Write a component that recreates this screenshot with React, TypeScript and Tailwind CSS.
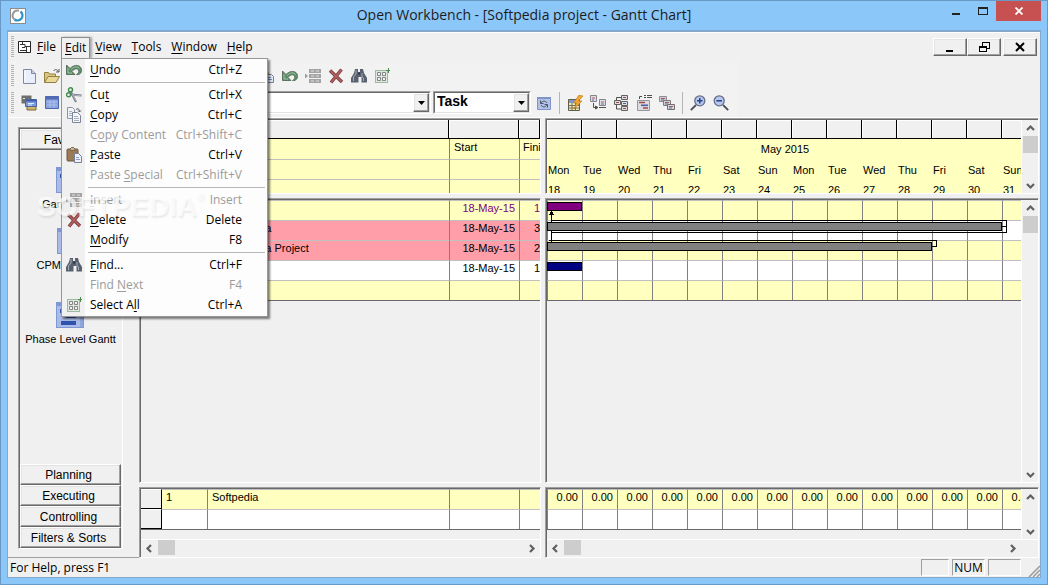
import React from 'react';
import clsx from 'clsx';

const RAISED = 'border border-t-white border-l-white border-r-[#696969] border-b-[#696969] shadow-[inset_-1px_-1px_0_#a0a0a0,inset_1px_1px_0_#e3e3e3]';

type IconProps = { className?: string };

const Svg: React.FC<{ children: React.ReactNode; className?: string }> = ({ children, className }) => (
  <svg viewBox="0 0 16 16" className={clsx('h-4 w-4 flex-none', className)} fill="none" aria-hidden="true">
    {children}
  </svg>
);

const UndoIcon: React.FC<IconProps> = ({ className }) => (
  <Svg className={className}>
    <path d="M.5 3v9.500h8.500l-3-3C8 6.500 11.500 6 12.500 8c1 2-.5 3.500-2 4.500 3.500.5 5.500-2 5-5C14.800 3 9 1.500 4 6.500Z" fill="#5f9069" stroke="#47604c" strokeWidth=".8" />
    <path d="M2 6v5h4M5 7.500C8 4.500 12 4 13.500 6.500" stroke="#9cc2a2" />
  </Svg>
);

const CutIcon = () => (
  <Svg>
    <circle cx="4.500" cy="2.800" r="2" stroke="#3c8a47" strokeWidth="1.400" />
    <circle cx="2.600" cy="7.800" r="2" stroke="#3c8a47" strokeWidth="1.400" />
    <path d="M5 5l5 10M4.500 7.500l11 1" stroke="#6f7785" strokeWidth="2" />
    <path d="M6 6.500l4 7.500M7 8l8 .7" stroke="#c3c8d2" strokeWidth=".8" />
  </Svg>
);

const CopyIcon = () => (
  <Svg>
    <path d="M1.500.5h5l2 2v9h-7z" fill="#eef1f6" stroke="#8b93a4" />
    <path d="M3 4.500h3M3 6.500h3M3 8.500h3" stroke="#a9b1c0" />
    <path d="M6.500 5.500h5l3 3v7h-8z" fill="#f5f7fb" stroke="#7d8698" />
    <path d="M8 9.500h4M8 11.500h5M8 13.500h5" stroke="#a9b1c0" />
    <path d="M10 2.500c2-1.500 3.500-.5 3.500 2M12 3.500l1.500 1.500L15 3.500" stroke="#4d5563" />
  </Svg>
);

const PasteIcon = () => (
  <Svg>
    <rect x="1" y="2" width="11" height="12" rx="1" fill="#9a7b55" stroke="#6e583e" />
    <path d="M4 3.500V2l1.500-1.500h2L9 2v1.500z" fill="#c2b291" stroke="#776850" />
    <path d="M8.500 6.500h4l3 3v6h-7z" fill="#eef2fa" stroke="#75809a" />
    <path d="M10 10.500h3M10 12.500h4" stroke="#8fa0c4" />
  </Svg>
);

const InsertIcon = () => (
  <Svg>
    <path d="M0 5.500l3 2.500-3 2.500z" fill="#9c9c9c" />
    <path d="M4 1h12v4H4zM4 6h12v4H4zM4 11h12v4H4z" fill="#a3a3a3" />
    <path d="M6 3h3M11 3h3M6 8h3M11 8h3M6 13h3M11 13h3" stroke="#e2e2e2" />
  </Svg>
);

const DeleteIcon = () => (
  <Svg>
    <path d="M2 2.500l12 11.500M13.500 1.500L3 14.500" stroke="#7a4243" strokeWidth="3.400" />
    <path d="M2 2.500l12 11.500M13.500 1.500L3 14.500" stroke="#b9605f" strokeWidth="1.600" />
  </Svg>
);

const FindIcon = () => (
  <Svg>
    <path d="M4 1h3v3h2V1h3l1 4 3 5v4.500h-5.500V9h-3v5.500H0V10l3-5z" fill="#59616f" />
    <path d="M5 2v4L2.500 9v4M11 5v4l1.500 1v3" stroke="#a5aebc" />
    <path d="M7 5.500h2" stroke="#2f3540" strokeWidth="2" />
  </Svg>
);

const SelectAllIcon = () => (
  <Svg>
    <rect x="1.500" y="2.500" width="12" height="12" stroke="#4f8a55" strokeDasharray="1 1" fill="#dfe8e0" />
    <path d="M3.500 4.500h3v3h-3zM8.500 4.500h3v3h-3zM3.500 9.500h3v3h-3zM8.500 9.500h3v3h-3z" fill="#f4f4f4" stroke="#858585" />
    <path d="M14.500 0v5M12 2.500h4" stroke="#4f8a55" />
  </Svg>
);

const NewIcon = () => (
  <Svg>
    <path d="M2.500 1.500h8l4 4v10h-12z" fill="#e9eefb" stroke="#8089a3" />
    <path d="M10.500 1.500v4h4" fill="#c5cde0" stroke="#8089a3" />
    <path d="M4 14V3" stroke="#fff" />
  </Svg>
);

const OpenIcon = () => (
  <Svg>
    <path d="M.5 14.500v-10h4l1 1.500h6v3" fill="#d9c684" stroke="#93803f" />
    <path d="M.5 14.500l3.500-6h11.500l-3.500 6z" fill="#e8d899" stroke="#93803f" />
    <path d="M9.500 3c2-2.500 4-1.500 5 1M12 4h3V1" stroke="#565b63" />
  </Svg>
);

const PreviewIcon = () => (
  <Svg>
    <path d="M7 1l4 6H5z" fill="#a9875b" />
    <path d="M6.500 6.500h6l2 2v6h-8z" fill="#dfe6f5" stroke="#75809a" />
    <path d="M8 9.500h4M8 11.500h5" stroke="#7b8bb5" />
  </Svg>
);

const ViewsIcon = () => (
  <Svg>
    <path d="M6 6h9v9H6z" fill="#cfb865" stroke="#78693a" />
    <path d="M.5.500h10v8H.500z" fill="#70706b" />
    <path d="M4.500 4.500h11v7h-11z" fill="#7a98dd" stroke="#4a62a0" />
    <path d="M5 5.500h10" stroke="#3f5da8" strokeWidth="2" />
    <path d="M2 3.500h2M7 8.500h6M7 10h4" stroke="#dfe7fb" />
  </Svg>
);

const WindowIcon = () => (
  <Svg>
    <path d="M1.500 1.500h13v12h-13z" fill="#88a2df" stroke="#4a66ad" />
    <path d="M1 3h14" stroke="#4f6cb4" strokeWidth="3" />
    <path d="M3 7h10M3 10h10M6 5v8M10 5v8" stroke="#aebfec" />
  </Svg>
);

const RefreshIcon = () => (
  <Svg>
    <path d="M1.500 2.500h13v12h-13z" fill="#b4c1e4" stroke="#7f94c8" />
    <path d="M1 3h14" stroke="#7f94c8" strokeWidth="2" />
    <path d="M4.500 5.500v3h3M5 8c1.500-2.500 4.500-2.500 6 0M11.500 12.500v-3h-3M11 10c-1.500 2.500-4.500 2.500-6 0" stroke="#46536f" />
  </Svg>
);

const ScheduleIcon = () => (
  <Svg>
    <path d="M1.500 4.500h11v11h-11z" fill="#efe8b5" stroke="#5d5d49" />
    <path d="M2 5h10v3H2z" fill="#7f96cf" />
    <path d="M2 10.500h10M2 13h10M5 8v7M8.500 8v7" stroke="#6f7058" />
    <path d="M12 0L6.500 8h3L7 14l8-8h-3.500L16 1z" fill="#f3a52f" stroke="#b9741c" strokeWidth=".6" />
  </Svg>
);

const LinkIcon = () => (
  <Svg>
    <path d="M.5.500h6v6h-6zM9.500 4.500h6v6h-6z" fill="#dddde6" stroke="#85858d" />
    <path d="M2 3h3M11 7h3" stroke="#b0595a" />
    <path d="M2 5h2M11 9h3" stroke="#5d6fb0" />
    <path d="M3.500 8v4.500H7M5.500 11v3L8 12.500zM9 12.500h7" stroke="#4e5148" />
  </Svg>
);

const NetworkIcon = () => (
  <Svg>
    <path d="M8.500.500h6v4h-6zM1.500 5.500h6v4h-6zM8.500 6.500h6v4h-6zM8.500 11.500h6v4h-6z" fill="#dddde6" stroke="#62625c" />
    <path d="M10 2.500h3M3 7.500h3M10 13.500h3" stroke="#a7484a" />
    <path d="M10 8.500h3" stroke="#4b5fa8" />
    <path d="M8 2.500H3.500V5M3.500 10v4H8" stroke="#4e5148" />
  </Svg>
);

const OutlineIcon = () => (
  <Svg>
    <path d="M3.500 4V1.500H6M8 .500h2M11 .500h5M8 2.500h2M11 2.500h5" stroke="#4e5148" />
    <path d="M1.500 5.500h12v10h-12z" fill="#dcdce0" stroke="#96969b" />
    <path d="M3 7.500h6M7 13h5" stroke="#a7484a" strokeWidth="1.600" />
    <path d="M5 10.300h7" stroke="#4b5fa8" strokeWidth="1.600" />
  </Svg>
);

const CascadeIcon = () => (
  <Svg>
    <path d="M.5 1.500h7v5h-7z" fill="#cfcfd6" stroke="#8b8b90" />
    <path d="M4.500 5.500h7v5h-7z" fill="#cfcfd6" stroke="#7c7c82" />
    <path d="M8.500 9.500h7v5h-7z" fill="#d5d5dc" stroke="#6f6f75" />
    <path d="M2 3.500h4M6 7.500h4M10 11.500h4" stroke="#b0595a" />
    <path d="M2 5h3M6 9h3M10 13h3" stroke="#5d6fb0" />
  </Svg>
);

const MagnifierIcon: React.FC<{ plus?: boolean }> = ({ plus }) => (
  <Svg className={plus ? '' : '-scale-x-100'}>
    <path d="M.8 15.200L6 10" stroke="#4c4e58" strokeWidth="1.800" />
    <circle cx="9.800" cy="5.800" r="5" fill="#b6c8f1" stroke="#686e84" strokeWidth="1.300" />
    <path d={plus ? 'M7 5.800h5.600M9.800 3v5.600' : 'M7 5.800h5.600'} stroke="#29427f" strokeWidth="1.500" />
  </Svg>
);

const GanttTile = () => (
  <svg viewBox="0 0 28 26" className="h-[26px] w-7" aria-hidden="true">
    <path d="M0 0h28v26H0z" fill="#7f98d3" />
    <path d="M1 4h26v21H1z" fill="#a9bbe6" />
    <path d="M4 7h5v4H4zM10 12h10v4H10zM5 19h15v4H5z" fill="#2e54ad" />
    <path d="M24 5h3v20h-3z" fill="#8fa6dc" />
  </svg>
);

const AppLogo = () => (
  <svg viewBox="0 0 16 16" className="h-4 w-4" aria-hidden="true">
    <path d="M0 0h16v16H0z" fill="#8b8b8b" />
    <path d="M1 1h14v14H1z" fill="#fff" />
    <path d="M4.500 11.500A5 5 0 0 1 9 2.800" stroke="#9a9a9a" strokeWidth="2" fill="none" />
    <path d="M10.500 3.500a4.800 4.800 0 1 1-6 8" stroke="#2e93c6" strokeWidth="2.200" fill="none" />
  </svg>
);

type MenuEntry = { before: string; key: string; after: string; shortcut: string; icon?: React.ReactNode; disabled?: boolean };

const MENU: (MenuEntry | null)[] = [
  { before: '', key: 'U', after: 'ndo', shortcut: 'Ctrl+Z', icon: <UndoIcon /> },
  null,
  { before: 'Cu', key: 't', after: '', shortcut: 'Ctrl+X', icon: <CutIcon /> },
  { before: '', key: 'C', after: 'opy', shortcut: 'Ctrl+C', icon: <CopyIcon /> },
  { before: 'C', key: 'o', after: 'py Content', shortcut: 'Ctrl+Shift+C', disabled: true },
  { before: '', key: 'P', after: 'aste', shortcut: 'Ctrl+V', icon: <PasteIcon /> },
  { before: 'Paste ', key: 'S', after: 'pecial', shortcut: 'Ctrl+Shift+V', disabled: true },
  null,
  { before: '', key: 'I', after: 'nsert', shortcut: 'Insert', icon: <InsertIcon />, disabled: true },
  { before: '', key: 'D', after: 'elete', shortcut: 'Delete', icon: <DeleteIcon /> },
  { before: '', key: 'M', after: 'odify', shortcut: 'F8' },
  null,
  { before: '', key: 'F', after: 'ind...', shortcut: 'Ctrl+F', icon: <FindIcon /> },
  { before: 'Find ', key: 'N', after: 'ext', shortcut: 'F4', disabled: true },
  { before: 'Select A', key: 'l', after: 'l', shortcut: 'Ctrl+A', icon: <SelectAllIcon /> },
];

const EditMenu = () => (
  <div role="menu" className="absolute -left-px top-[20px] z-20 w-[207px] border border-[#979797] bg-[linear-gradient(to_right,#f0f0f0_23px,#fdfdfd_23px)] py-px shadow-[2px_2px_2px_rgba(0,0,0,0.5)]">
    {MENU.map((m, i) =>
      m === null ? (
        <div key={i} role="separator" className="ml-[26px] mr-0.5 flex h-[5px] items-center">
          <div className="h-px w-full bg-[#b8b8b8]" />
        </div>
      ) : (
        <button key={i} role="menuitem" disabled={m.disabled} className={clsx('flex h-5 w-full items-center pl-1 pr-[25px]', m.disabled ? 'text-[#9b9b9b]' : 'text-black')}>
          <span className="flex w-6 flex-none items-center">{m.icon}</span>
          <span className="flex-1 whitespace-nowrap text-left">
            {m.before}<u className="underline-offset-2">{m.key}</u>{m.after}
          </span>
          <span className="whitespace-nowrap">{m.shortcut}</span>
        </button>
      )
    )}
  </div>
);

const Watermark = () => (
  <div className="pointer-events-none absolute left-9 top-[190px] z-30 flex font-['Liberation_Sans',sans-serif] text-[28px] leading-8 font-bold text-white/70 [text-shadow:1px_2px_2px_rgba(0,0,0,0.08)]">
    SOFTPEDIA<span className="text-[10px] leading-3">®</span>
  </div>
);

const TopItem: React.FC<{ label: string }> = ({ label }) => (
  <button className="px-[5px]">
    <u className="underline-offset-2">{label[0]}</u>{label.slice(1)}
  </button>
);

const Gripper = () => <div className="h-[22px] w-[3px] flex-none bg-[repeating-linear-gradient(#b4b4b4_0_1px,#f0f0f0_1px_2px)]" />;

const MenuBar = () => (
  <div className="flex h-7 items-center pl-[3px] pr-[3px]">
    <Gripper />
    <svg viewBox="0 0 13 13" className="ml-1 mr-px h-[13px] w-[13px]" aria-hidden="true">
      <path d="M.5.500h12v11H.500z" fill="#fff" stroke="#222" />
      <path d="M2 3.500h5v3H4M7 5.500h5M2 9.500h7M8.500 6v5M4.500 1v3" stroke="#333" fill="none" />
    </svg>
    <div className="flex items-center text-[12px] leading-4">
      <TopItem label="File" />
      <div className="relative border border-b-0 border-[#8c8c8c] bg-[#f0f0f0] pb-0.5 pt-0.5 shadow-[2px_0_2px_rgba(0,0,0,0.3)]">
        <button className="px-[3px]" aria-haspopup="menu" aria-expanded="true"><u className="underline-offset-2">E</u>dit</button>
        <EditMenu />
      </div>
      <TopItem label="View" />
      <TopItem label="Tools" />
      <TopItem label="Window" />
      <TopItem label="Help" />
    </div>
    <div className="ml-auto flex">
      <button aria-label="Minimize document" className={clsx('flex h-[18px] w-[34px] items-center justify-center', RAISED)}>
        <svg viewBox="0 0 12 12" className="h-3 w-3"><path d="M2 9h7v2H2z" /></svg>
      </button>
      <button aria-label="Restore document" className={clsx('flex h-[18px] w-[34px] items-center justify-center', RAISED)}>
        <svg viewBox="0 0 12 12" className="h-3 w-3" shapeRendering="crispEdges">
          <path d="M4.500 5V1.500h7v6H9M4 1h8M1.500 5.500h7v5h-7zM1 6h8" stroke="#000" fill="none" />
        </svg>
      </button>
      <button aria-label="Close document" className={clsx('ml-0.5 flex h-[18px] w-[34px] items-center justify-center', RAISED)}>
        <svg viewBox="0 0 12 12" className="h-3 w-3"><path d="M2 2l8 8M10 2l-8 8" stroke="#000" strokeWidth="2" /></svg>
      </button>
    </div>
  </div>
);

const ToolButton: React.FC<{ label: string; children: React.ReactNode }> = ({ label, children }) => (
  <button aria-label={label} className="flex h-[23px] w-[23px] flex-none items-center justify-center">{children}</button>
);

const ToolSeparator = () => <div className="ml-1 mr-[3px] h-[22px] w-px flex-none bg-[#b5b5b5]" />;

const Combo: React.FC<{ label: string; value: string; className: string }> = ({ label, value, className }) => (
  <div className={clsx('relative h-[23px] flex-none border border-[#a0a0a0] border-b-white border-r-white', className)}>
    <select aria-label={label} defaultValue={value} className="block h-full w-full appearance-none border border-[#696969] border-b-[#e3e3e3] border-r-[#e3e3e3] bg-white pl-0.5 pb-1 font-['Liberation_Sans',sans-serif] text-[14px] leading-4 font-bold">
      <option value={value}>{value}</option>
    </select>
    <span className={clsx('pointer-events-none absolute right-px top-px flex h-[19px] w-4 items-center justify-center bg-[#f0f0f0]', RAISED)}>
      <svg viewBox="0 0 7 4" className="h-1 w-[7px]"><path d="M0 0h7L3.500 4z" /></svg>
    </span>
  </div>
);

const Toolbars = () => (
  <div className="w-[730px] flex-none bg-[#f2f2f2] pb-px pl-[3px] pt-0.5">
    <div className="flex h-[26px] items-center">
      <Gripper />
      <div className="ml-[3px] flex">
        <ToolButton label="New"><NewIcon /></ToolButton>
        <ToolButton label="Open"><OpenIcon /></ToolButton>
      </div>
      <div className="ml-[192px] flex">
        <ToolButton label="Preview"><PreviewIcon /></ToolButton>
        <ToolButton label="Undo"><UndoIcon /></ToolButton>
        <ToolButton label="Insert"><InsertIcon /></ToolButton>
        <ToolButton label="Delete"><DeleteIcon /></ToolButton>
        <ToolButton label="Find"><FindIcon /></ToolButton>
        <ToolButton label="Select all"><SelectAllIcon /></ToolButton>
      </div>
    </div>
    <div className="flex h-[27px] items-center">
      <Gripper />
      <div className="ml-[3px] flex">
        <ToolButton label="Views"><ViewsIcon /></ToolButton>
        <ToolButton label="Window"><WindowIcon /></ToolButton>
      </div>
      <Combo label="View" value="" className="ml-[138px] w-[230px]" />
      <Combo label="Item type" value="Task" className="ml-[2px] w-[98px]" />
      <div className="ml-px flex items-center">
        <ToolButton label="Refresh"><RefreshIcon /></ToolButton>
        <ToolSeparator />
        <ToolButton label="Schedule"><ScheduleIcon /></ToolButton>
        <ToolButton label="Link"><LinkIcon /></ToolButton>
        <ToolButton label="Network"><NetworkIcon /></ToolButton>
        <ToolButton label="Outline"><OutlineIcon /></ToolButton>
        <ToolButton label="Cascade"><CascadeIcon /></ToolButton>
        <ToolSeparator />
        <ToolButton label="Zoom in"><MagnifierIcon plus /></ToolButton>
        <ToolButton label="Zoom out"><MagnifierIcon /></ToolButton>
      </div>
    </div>
  </div>
);

const SideButton: React.FC<{ label: string }> = ({ label }) => (
  <button className={clsx('h-[21px] w-full flex-none bg-[#f0f0f0] pr-1 text-center text-[12px] leading-[18px]', RAISED)}>{label}</button>
);

const VIEWS = [
  { label: 'Gantt Chart', gap: 'mb-[17px]' },
  { label: 'CPM Network', gap: 'mb-[30px]' },
  { label: 'Phase Level Gantt', gap: '' },
];

const Sidebar = () => (
  <aside className="flex w-[131px] flex-none flex-col border-b border-b-[#a0a0a0] pb-2 pl-2.5 pr-4 pt-[9px]">
    <div className="flex flex-1 flex-col border border-b-white border-l-[#a0a0a0] border-r-white border-t-[#a0a0a0]">
      <div className="flex flex-1 flex-col border-l border-t border-[#696969] pr-px">
        <SideButton label="Favorites" />
        <nav className="flex flex-1 flex-col items-center pt-[17px]">
          {VIEWS.map((v) => (
            <a key={v.label} href="#" className={clsx('flex flex-col items-center', v.gap)}>
              <GanttTile />
              <span className="mt-1 whitespace-nowrap text-[11px] leading-[14px]">{v.label}</span>
            </a>
          ))}
        </nav>
        <SideButton label="Planning" />
        <SideButton label="Executing" />
        <SideButton label="Controlling" />
        <SideButton label="Filters & Sorts" />
      </div>
    </div>
  </aside>
);

const Pane: React.FC<{ className: string; children: React.ReactNode }> = ({ className, children }) => (
  <div className={clsx('flex min-h-0 flex-col border border-b-white border-l-[#a0a0a0] border-r-white border-t-[#a0a0a0]', className)}>
    <div className="flex min-h-0 flex-1 flex-col overflow-hidden border-l border-t border-[#696969]">{children}</div>
  </div>
);

const CHEVRONS = { up: 'M1 6l3.500-3.500L8 6', down: 'M1 3l3.500 3.500L8 3', left: 'M6 1L2.500 4.500 6 8', right: 'M3 1l3.500 3.500L3 8' };

const Chevron: React.FC<{ dir: keyof typeof CHEVRONS }> = ({ dir }) => (
  <button aria-label={`Scroll ${dir}`} className="flex h-4 w-[17px] flex-none items-center justify-center">
    <svg viewBox="0 0 9 9" className="h-[9px] w-[9px]"><path d={CHEVRONS[dir]} stroke="#606060" strokeWidth="2.200" fill="none" /></svg>
  </button>
);

const VScroll: React.FC<{ thumb?: boolean }> = ({ thumb }) => (
  <div className="flex w-[17px] flex-none flex-col items-center justify-between border-l border-white bg-[#f0f0f0]">
    <div className="flex flex-col items-center">
      <Chevron dir="up" />
      {thumb && <div className="h-[17px] w-[15px] bg-[#cdcdcd]" />}
    </div>
    <Chevron dir="down" />
  </div>
);

const HScroll: React.FC<{ corner?: boolean }> = ({ corner }) => (
  <div className={clsx('flex h-[18px] flex-none items-start justify-between border-t border-white bg-[#f0f0f0]', corner && 'pr-[17px]')}>
    <div className="flex items-start">
      <Chevron dir="left" />
      <div className="h-[15px] w-[17px] bg-[#cdcdcd]" />
    </div>
    <Chevron dir="right" />
  </div>
);

const TABLE = 'border-separate border-spacing-0 table-fixed text-[11px] leading-[14px]';
const HEAD_CELL = 'h-[19px] border-b border-r border-black bg-[#f0f0f0] p-0 shadow-[inset_1px_1px_0_#fff]';

const GridCols = () => (
  <colgroup>
    <col className="w-5" />
    <col className="w-[46px]" />
    <col className="w-[242px]" />
    <col className="w-[70px]" />
    <col />
  </colgroup>
);

const TASKS = [
  { name: '', start: '18-May-15', finish: '1', row: 'bg-[#ffffc0] text-[#800080]' },
  { name: 'Softpedia', start: '18-May-15', finish: '3', row: 'bg-[#ff9ea8]' },
  { name: 'Softpedia Project', start: '18-May-15', finish: '2', row: 'bg-[#ff9ea8]' },
  { name: '', start: '18-May-15', finish: '1', row: 'bg-white' },
  { name: '', start: '', finish: '', row: 'bg-[#ffffc0]' },
];

const CELL = 'h-5 overflow-hidden whitespace-nowrap border-l border-t border-l-[#808080] border-t-[#c0c0c0] p-0 align-top';

const TaskHeader = () => (
  <table className={clsx(TABLE, 'w-full')}>
    <GridCols />
    <thead>
      <tr>{[0, 1, 2, 3, 4].map((i) => <td key={i} className={HEAD_CELL} />)}</tr>
      <tr className="bg-[#ffffc0] text-left align-top">
        <td className="h-5 border-r border-black bg-[#f0f0f0] p-0" />
        <td className="p-0" />
        <td className="p-0" />
        <th className="border-l border-[#808080] p-0 pl-1 pt-px font-normal">Start</th>
        <th className="overflow-hidden border-l border-[#808080] p-0 pl-[3px] pt-px font-normal">Finish</th>
      </tr>
      {[0, 1].map((r) => (
        <tr key={r} className="bg-[#ffffc0]">{[0, 1, 2, 3, 4].map((i) => <td key={i} className={CELL} />)}</tr>
      ))}
    </thead>
  </table>
);

const TaskTable = () => (
  <table className={clsx(TABLE, 'w-full border-b border-[#696969]')}>
    <GridCols />
    <tbody>
      {TASKS.map((t, i) => (
        <tr key={i} className={t.row}>
          <td className={clsx(CELL, 'bg-[#f0f0f0]')} />
          <td className={CELL} />
          <td className={clsx(CELL, 'pl-[17px]')}>{t.name}</td>
          <td className={clsx(CELL, 'pr-1 text-right')}>{t.start}</td>
          <td className={clsx(CELL, 'pl-3.5')}>{t.finish}</td>
        </tr>
      ))}
    </tbody>
  </table>
);

const ResourceTable = () => (
  <table className={clsx(TABLE, 'w-full border-b border-[#696969]')}>
    <GridCols />
    <tbody>
      {[['1', 'Softpedia'], ['', '']].map(([id, name], i) => (
        <tr key={i} className={i === 0 ? 'bg-[#ffffc0]' : 'bg-white'}>
          <td className="h-5 border-b border-t border-black border-t-white bg-[#f0f0f0] p-0" />
          <td className={clsx(CELL, 'border-l-black pl-1')}>{id}</td>
          <td className={clsx(CELL, 'pl-1')}>{name}</td>
          <td className={CELL} />
          <td className={CELL} />
        </tr>
      ))}
    </tbody>
  </table>
);

const DAYS = ['Mon', 'Tue', 'Wed', 'Thu', 'Fri', 'Sat', 'Sun'];
const DATES = Array.from({ length: 14 }, (_, i) => ({ day: DAYS[i % 7], date: 18 + i }));

const TimelineHeader = () => (
  <table className={clsx(TABLE, 'w-[490px] text-left')}>
    <thead>
      <tr>{DATES.map((d) => <td key={d.date} className={HEAD_CELL} />)}</tr>
      <tr className="bg-[#ffffc0]"><th colSpan={14} className="h-[21px] p-0 pb-0.5 pr-3.5 text-center font-normal">May 2015</th></tr>
      <tr className="bg-[#ffffc0]">{DATES.map((d) => <th key={d.date} className="h-5 p-0 pl-px font-normal">{d.day}</th>)}</tr>
      <tr className="bg-[#ffffc0]">{DATES.map((d) => <th key={d.date} className="h-5 p-0 pl-px font-normal">{d.date}</th>)}</tr>
    </thead>
  </table>
);

const GanttChart = () => (
  <div className="relative">
    <table className={clsx(TABLE, 'w-[490px] border-b border-[#696969]')}>
      <tbody>
        {[0, 1, 2, 3, 4].map((r) => (
          <tr key={r} className={r % 2 ? 'bg-white' : 'bg-[#ffffc0]'}>
            {DATES.map((d) => <td key={d.date} className={CELL} />)}
          </tr>
        ))}
      </tbody>
    </table>
    <svg viewBox="0 0 490 101" className="absolute left-0 top-0 h-[101px] w-[490px]" shapeRendering="crispEdges" stroke="#000">
      <path d="M4.500 12v30M4 20.500h455.500v12H4M2 40.500h387.500v6H385M455 26.500h4" fill="none" />
      <path d="M4.500 11.500l2 3h-4z" fill="#000" />
      <rect x=".5" y="2.500" width="34" height="8" fill="#800080" />
      <rect x=".5" y="22.500" width="454" height="8" fill="#808080" />
      <rect x=".5" y="42.500" width="384" height="8" fill="#808080" />
      <rect x=".5" y="62.500" width="34" height="8" fill="#000080" />
    </svg>
  </div>
);

const LoadTable = () => (
  <table className={clsx(TABLE, 'w-[490px] border-b border-[#696969]')}>
    <tbody>
      <tr className="bg-[#ffffc0]">{DATES.map((d) => <td key={d.date} className={clsx(CELL, 'pr-1 text-right')}>0.00</td>)}</tr>
      <tr className="bg-white">{DATES.map((d) => <td key={d.date} className={CELL} />)}</tr>
    </tbody>
  </table>
);

const Workspace = () => (
  <main className="flex min-h-0 flex-1 pr-px">
    <Sidebar />
    <div className="flex w-[402px] flex-none flex-col gap-1">
      <Pane className="h-[76px] flex-none"><TaskHeader /></Pane>
      <Pane className="flex-1"><TaskTable /></Pane>
      <Pane className="h-[71px] flex-none">
        <div className="flex-1"><ResourceTable /></div>
        <HScroll />
      </Pane>
    </div>
    <div className="ml-1 flex min-w-0 flex-1 flex-col gap-1">
      <Pane className="h-[76px] flex-none">
        <div className="flex min-h-0 flex-1">
          <div className="min-w-0 flex-1 overflow-hidden"><TimelineHeader /></div>
          <VScroll thumb />
        </div>
      </Pane>
      <Pane className="flex-1">
        <div className="flex min-h-0 flex-1">
          <div className="min-w-0 flex-1 overflow-hidden"><GanttChart /></div>
          <VScroll thumb />
        </div>
      </Pane>
      <Pane className="h-[71px] flex-none">
        <div className="flex min-h-0 flex-1">
          <div className="min-w-0 flex-1 overflow-hidden"><LoadTable /></div>
          <VScroll />
        </div>
        <HScroll corner />
      </Pane>
    </div>
  </main>
);

const STATUS_BOX = 'h-[17px] border border-b-white border-l-[#a0a0a0] border-r-white border-t-[#a0a0a0]';

const StatusBar = () => (
  <footer className="flex h-[19px] flex-none items-center gap-[3px] pl-0.5 font-['Open_Sans',sans-serif] text-[12px] leading-[15px]">
    <span className="flex-1">For Help, press F1</span>
    <span className={clsx(STATUS_BOX, 'w-7')} />
    <span className={clsx(STATUS_BOX, 'w-[33px] text-center')}>NUM</span>
    <span className={clsx(STATUS_BOX, 'w-[33px]')} />
    <svg viewBox="0 0 12 12" className="ml-1 h-3 w-3 self-end" aria-hidden="true">
      <path d="M1 12L12 1M5 12l7-7M9 12l3-3" stroke="#9a9a9a" strokeWidth="1.500" />
    </svg>
  </footer>
);

const TitleBar = () => (
  <header className="flex h-[29px] flex-none">
    <div className="flex w-[99px] items-center pl-[3px]"><AppLogo /></div>
    <h1 className="flex-1 text-center text-[14px] leading-7 text-[#1c1c1c]">Open Workbench - [Softpedia project - Gantt Chart]</h1>
    <div className="flex items-start">
      <button aria-label="Minimize" className="flex h-5 w-[27px] items-center justify-center">
        <svg viewBox="0 0 10 10" className="h-2.5 w-2.5"><path d="M1 7h8v2H1z" fill="#222" /></svg>
      </button>
      <button aria-label="Maximize" className="flex h-5 w-[27px] items-center justify-center">
        <svg viewBox="0 0 10 8" className="h-2 w-2.5" shapeRendering="crispEdges"><path d="M.5.500h9v7h-9zM0 1h10" stroke="#222" fill="none" /></svg>
      </button>
      <button aria-label="Close" className="flex h-5 w-[45px] items-center justify-center bg-[#c75050]">
        <svg viewBox="0 0 8 8" className="h-2 w-2"><path d="M.5.500l7 7M7.500.500l-7 7" stroke="#fff" strokeWidth="1.800" /></svg>
      </button>
    </div>
  </header>
);

const App: React.FC = () => (
  <div className="relative flex h-screen flex-col overflow-hidden border border-[#6a98c6] bg-[#8cc7fa] px-1.5 pb-1.5 font-['Liberation_Sans',sans-serif] text-black">
    <div className="font-['Open_Sans',sans-serif]"><TitleBar /></div>
    <div className="flex min-h-0 flex-1 flex-col border border-t-2 border-[#84a9cd] bg-[#f0f0f0]">
      <div className="flex-none border-b border-t border-white font-['Open_Sans',sans-serif]">
        <MenuBar />
        <Toolbars />
      </div>
      <Workspace />
      <StatusBar />
    </div>
    <Watermark />
  </div>
);

export default App;
